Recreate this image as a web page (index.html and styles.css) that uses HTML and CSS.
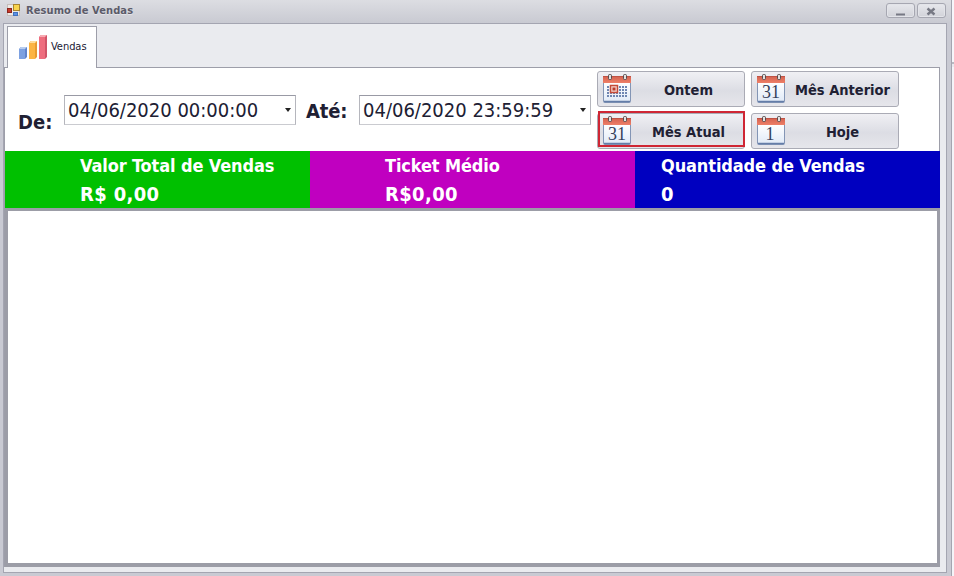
FILE: index.html
```html
<!DOCTYPE html>
<html lang="pt-BR">
<head>
<meta charset="utf-8">
<title>Resumo de Vendas</title>
<link rel="stylesheet" href="styles.css">
</head>
<body>
<svg class="defs" width="0" height="0">
  <defs>
    <linearGradient id="paper" x2="0" y2="1"><stop offset="0" stop-color="#fff"/><stop offset="1" stop-color="#dfe9f7"/></linearGradient>
    <linearGradient id="red" x2="0" y2="1"><stop offset="0" stop-color="#d2604e"/><stop offset="1" stop-color="#ee8068"/></linearGradient>
    <symbol id="calendar" viewBox="0 0 30 32">
      <path d="M1.5 9.500V28.500q0 1 1 1h25q1 0 1-1V9.500z" fill="url(#paper)" stroke="#8395b5"/>
      <path d="M2 28.500h26" stroke="#647da8" stroke-width="1.500"/>
      <path d="M1 10V4q0-1 1-1h26q1 0 1 1v6z" fill="url(#red)"/>
      <path d="M1 3.500h28" stroke="#bf5345"/>
      <rect x="6.500" y="1.500" width="3" height="5" rx="1" fill="#e5e0df" stroke="#554b4c"/>
      <rect x="21.500" y="1.500" width="3" height="5" rx="1" fill="#e5e0df" stroke="#554b4c"/>
    </symbol>
  </defs>
</svg>
<div class="screen">
<div class="window">
  <header class="titlebar">
    <svg class="app-icon" width="14" height="14" viewBox="0 0 14 14">
      <rect x=".5" y="1.500" width="12" height="11" fill="#eeeae5" stroke="#c5bdbb"/>
      <rect x=".5" y="5.500" width="4" height="4" fill="#c93a2b" stroke="#8d251d"/>
      <rect x="6.500" y="1.500" width="6" height="6" fill="#f8d44d" stroke="#a88530"/>
      <rect x="6.500" y="9.500" width="4" height="3" fill="#5b92e5" stroke="#4271bd"/>
    </svg>
    <span class="title">Resumo de Vendas</span>
    <button class="win-button"><svg width="28" height="14"><path d="M10 10.500h9" stroke="#777984" stroke-width="2"/></svg></button>
    <button class="win-button"><svg width="28" height="14"><path d="M10.500 4.500l7 6M17.500 4.500l-7 6" stroke="#777984" stroke-width="2.400"/></svg></button>
  </header>
  <main class="client">
    <nav class="tabs">
      <div class="tab">
        <svg width="30" height="26" viewBox="0 0 30 26">
          <path d="M1 15l2-2h6v10l-2 2H1z" fill="#6184cb"/><path d="M1 15h6v10H1z" fill="#7da1e1"/><path d="M1 15l2-2h6l-2 2z" fill="#b7cdf0"/>
          <path d="M11 9l2-2h6v16l-2 2h-6z" fill="#e79a30"/><path d="M11 9h6v16h-6z" fill="#fcb444"/><path d="M11 9l2-2h6l-2 2z" fill="#ffdc9c"/>
          <path d="M21 3l2-2h6v22l-2 2h-6z" fill="#d05468"/><path d="M21 3h6v22h-6z" fill="#ee6d7e"/><path d="M21 3l2-2h6l-2 2z" fill="#f8aab2"/>
        </svg>
        <span class="tab-label">Vendas</span>
      </div>
    </nav>
    <section class="page">
      <div class="filters">
        <label class="from">De:</label>
        <div class="date"><span>04/06/2020 00:00:00</span><i class="arrow"></i></div>
        <label class="until">Até:</label>
        <div class="date"><span>04/06/2020 23:59:59</span><i class="arrow"></i></div>
        <div class="periods">
          <button class="period"><svg width="30" height="32"><use href="#calendar"/><path d="M5 14h21M5 17h21M5 20h21M5 23h21" stroke="#6f86b2" stroke-width="2" stroke-dasharray="2 1"/><rect x="8.500" y="12.500" width="7" height="7" fill="#f4d5ce" stroke="#c54b38" stroke-width="1.500"/><rect x="10.500" y="14.500" width="3" height="3" fill="#b93b2b"/></svg><span>Ontem</span></button>
          <button class="period"><svg width="30" height="32"><use href="#calendar"/><text class="day" x="15" y="25">31</text></svg><span>Mês Anterior</span></button>
          <button class="period selected"><svg width="30" height="32"><use href="#calendar"/><text class="day" x="15" y="25">31</text></svg><span>Mês Atual</span></button>
          <button class="period"><svg width="30" height="32"><use href="#calendar"/><text class="day" x="14" y="25">1</text></svg><span>Hoje</span></button>
        </div>
      </div>
      <div class="totals">
        <div class="total green"><b>Valor Total de Vendas</b><strong>R$ 0,00</strong></div>
        <div class="total purple"><b>Ticket Médio</b><strong>R$0,00</strong></div>
        <div class="total blue"><b>Quantidade de Vendas</b><strong>0</strong></div>
      </div>
      <div class="results"></div>
    </section>
  </main>
</div>
<aside class="outside"></aside>
</div>
</body>
</html>
```

FILE: styles.css
```css
* { box-sizing: border-box; }
body { margin: 0; overflow: hidden; font-family: "DejaVu Sans Condensed", "DejaVu Sans", sans-serif; font-stretch: condensed; color: #202033; }
button { font: inherit; color: inherit; padding: 0; }
svg { display: block; flex: none; }
.defs { position: absolute; }
.screen { display: flex; width: 954px; height: 576px; }
.window { width: 952px; height: 576px; padding: 0 4px 3px 3px; background: #c9cad3; border-right: 1px solid #a4a5b0; }
.titlebar { display: flex; align-items: flex-start; height: 23px; margin: 0 -4px 0 -3px; padding: 3px 5px 0 7px; background: linear-gradient(#dcdde2, #c9cad2); }
.title { margin-left: 5px; flex: 1; font: bold 11px/16px "DejaVu Sans Condensed", sans-serif; letter-spacing: .1px; color: #5b5b69; text-shadow: 0 1px #e4e4e9; }
.win-button { width: 29px; height: 15px; margin-left: 2px; border: 1px solid #a6a7b1; border-radius: 3px; background: linear-gradient(#e7e8ec, #d1d2d9); box-shadow: inset 0 0 0 1px #e3e4e9; }
.win-button svg { margin: -1px; }
.client { height: 550px; border: 1px solid #a4a5b1; padding: 2px 6px 5px 0; background: #eaebef; }
.tabs { height: 42px; padding-left: 3px; }
.tab { position: relative; z-index: 1; display: flex; width: 90px; height: 42px; padding: 7px 0 0 10px; border: 1px solid #9d9ea9; border-bottom: 0; background: #fff; }
.tab-label { margin: 6px 0 0 3px; font-size: 11px; line-height: 14px; letter-spacing: -.05px; }
.page { height: 500px; margin-top: -1px; border: 1px solid #9d9ea9; border-bottom: 0; background: #fff; }
.filters { display: flex; height: 83px; padding-left: 13px; }
.filters label { font-size: 20px; font-weight: bold; line-height: 24px; }
.from { width: 46px; margin-top: 42px; }
.until { width: 63px; padding-left: 10px; margin-top: 31px; letter-spacing: -.2px; }
.date { display: flex; width: 232px; height: 30px; margin-top: 27px; padding: 0 5px 0 3px; justify-content: space-between; border: 1px solid #b5b6bd; border-top-color: #999aa5; border-bottom-color: #cacbd0; font-size: 20px; line-height: 29px; }
.arrow { width: 0; height: 0; margin: 12px -1px 0 0; border: 3.5px solid transparent; border-top: 4px solid #222; border-bottom: 0; }
.periods { display: grid; grid-template-columns: 148px 148px; grid-auto-rows: 36px; gap: 6px; margin: 3px 0 0 6px; }
.period { display: flex; align-items: center; border: 1px solid #aaabb5; border-radius: 3px; background: linear-gradient(#f0f0f4, #dcdde4 55%, #e6e6eb); padding-left: 4px; }
.period span { flex: 1; padding: 1px 0 0 1px; font-size: 14.5px; font-weight: bold; }
.selected { position: relative; }
.selected::after { content: ""; position: absolute; inset: -3px -1px 1px 0; border: 2px solid #cf2634; }
.day { font: 18px "Liberation Serif", serif; fill: #35415b; text-anchor: middle; }
.totals { display: grid; grid-template-columns: 305px 325px 1fr; height: 57px; margin-right: -1px; color: #fff; }
.total { padding: 4px 0 0 75px; }
.total b, .total strong { display: block; }
.total b { font-size: 18px; line-height: 22px; letter-spacing: -.12px; }
.total strong { font-size: 20px; line-height: 24px; margin-top: 5px; letter-spacing: .35px; }
.green { background: #00c000; }
.purple { background: #c000c0; }
.total.blue { background: #0000c0; padding-left: 26px; }
.results { height: 359px; margin-right: -1px; border: 3px solid #9c9da7; border-bottom-width: 4px; background: #fff; }
.outside { width: 2px; height: 576px; background: linear-gradient(#f6f6fa 62px, #b9bac2 62px 64px, #e9eaef 64px 67px, #f4f4f8 67px); }
```
